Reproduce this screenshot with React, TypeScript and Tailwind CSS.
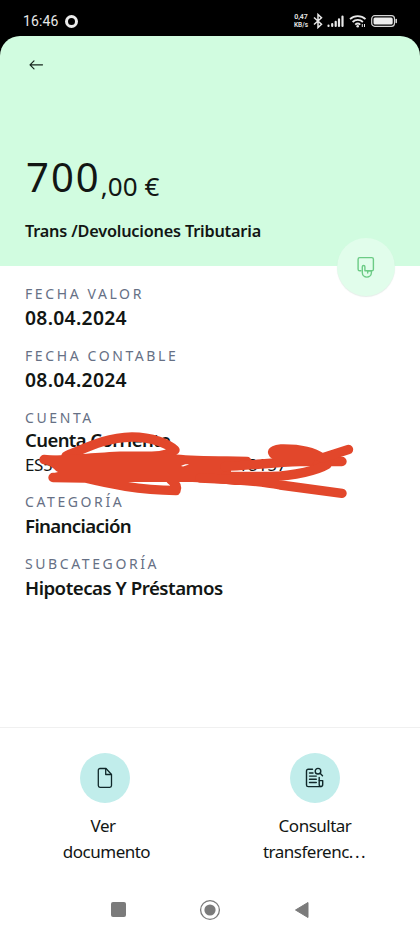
import type { ReactNode } from "react";

interface IDetail {
  label: string;
  value: string;
  valueStyle: string;
}

const topDetails: IDetail[] = [
  { label: "FECHA VALOR", value: "08.04.2024", valueStyle: "text-[19.3px] tracking-[0.3px]" },
  { label: "FECHA CONTABLE", value: "08.04.2024", valueStyle: "text-[19.3px] tracking-[0.3px]" },
];

const bottomDetails: IDetail[] = [
  { label: "CATEGORÍA", value: "Financiación", valueStyle: "text-[18.7px] tracking-[-0.65px]" },
  { label: "SUBCATEGORÍA", value: "Hipotecas Y Préstamos", valueStyle: "text-[18.7px] tracking-[-0.5px]" },
];

const StatusBar = () => (
  <div className="flex h-9 items-center bg-black pl-[23px] pr-[22px] pt-[6px] font-[Roboto,sans-serif] text-[#e8e8e8]">
    <span className="text-[14px] leading-4 tracking-[0.1px]">16:46</span>
    <span className="ml-[7px] size-[13px] rounded-full border-[3px] border-[#ececec]" />
    <div className="ml-auto flex items-center">
      <div className="flex w-4 flex-col gap-px text-center text-[7px] font-semibold leading-[7px]">
        <p>0,47</p>
        <p className="text-[6.5px]">KB/s</p>
      </div>
      <svg className="ml-[4px]" width="10" height="16" viewBox="0 0 10 16" fill="none" stroke="currentColor" strokeWidth="1.5">
        <path d="M1 4.5l7.5 6.7L5 14.5v-13l3.5 3.3L1 11.5" />
      </svg>
      <svg className="ml-[4px]" width="17" height="14" viewBox="0 0 17 14" fill="none" stroke="currentColor" strokeWidth="2.2" strokeLinecap="round">
        <path d="M1.5 11.7v.2M5.2 10v1.9M8.7 7.8v4.1M12 5.3v6.6M15.5 2.5v9.4" />
      </svg>
      <svg className="ml-[5px]" width="18" height="14" viewBox="0 0 18 14" fill="none" stroke="currentColor" strokeWidth="1.8">
        <path d="M1 5.2a11.3 11.3 0 0 1 15.5 0M3.6 8a7.5 7.5 0 0 1 10.3 0M6.2 10.6a3.9 3.9 0 0 1 5.1 0" />
        <circle cx="8.7" cy="12.2" r="1.3" fill="currentColor" stroke="none" />
        <path d="M13.3 10v3M15.5 10v3" strokeWidth="1" />
      </svg>
      <svg className="ml-[4px]" width="27" height="12" viewBox="0 0 27 12" fill="none">
        <rect x=".7" y=".7" width="22.8" height="10.6" rx="3" stroke="#d6d6d6" strokeWidth="1.2" />
        <rect x="2.5" y="2.4" width="19.2" height="7.2" rx="1.5" fill="#ececec" />
        <path d="M25.2 4.4v3.2" stroke="#ececec" strokeWidth="1.4" strokeLinecap="round" />
      </svg>
    </div>
  </div>
);

const Label = ({ children }: { children: ReactNode }) => (
  <p className="h-5 whitespace-nowrap text-[14px] leading-5 tracking-[2.6px] text-[#667085]">{children}</p>
);

const Detail = ({ label, value, valueStyle }: IDetail) => (
  <div className="h-[62px]">
    <Label>{label}</Label>
    <p className={"whitespace-nowrap font-semibold leading-7 " + valueStyle}>{value}</p>
  </div>
);

// Hand drawn marker strokes over the account number
const Scribble = () => (
  <svg
    className="absolute left-0 top-[22px]"
    width="370"
    height="70"
    viewBox="0 430 370 70"
    fill="none"
    stroke="#e2472b"
    strokeWidth="9.4"
    strokeLinecap="round"
    strokeLinejoin="round"
  >
    <path d="M66 456C88 447 106 437.5 132 437C153 437 168 444 175 450C170 455 158 456 150 457" />
    <path d="M44 459.5L60 461L180 461L247 461.5" />
    <path d="M53 477.5L85 478C110 484 138 490 176 490.5C178 486 175 483 171 480" />
    <path
      d="M44 456C75 455 90 453 120 451.500L158 451.500C170 455 190 456 247 457V469L231 470V472L270 474V480L262 485L235 485C200 481 180 482.500 90 482L53 480V473.500L58 472C54 470 53 466 44 464Z"
      fill="#e2472b"
      stroke="none"
    />
    <path d="M225 466.5C245 466 275 462 300 461.5L342 461.5" />
    <path d="M225 476.5L270 476.5C295 476 318 470 327 464.5" />
    <path d="M200 478C230 479 260 481 280 485L342 493.3" />
    <path d="M348.5 449.5L322 458C312 451 297 448.7 281 449C269 450 270 455 284 458.3L310 460" />
    <path d="M181 466C184 464 187 464 189 464.5L183 466.5Z" fill="white" stroke="none" />
  </svg>
);

const Action = ({ icon, children }: { icon: ReactNode; children: ReactNode }) => (
  <div className="flex w-[210px] flex-col items-center">
    <div className="flex size-[50px] items-center justify-center rounded-full bg-[#c1edeb]">{icon}</div>
    <div className="mt-[10px] whitespace-pre text-center text-[17px] leading-[26px] tracking-[-0.5px]">{children}</div>
  </div>
);

const DocumentIcon = () => (
  <svg width="24" height="24" viewBox="0 0 24 24" fill="none" stroke="#10282a" strokeWidth="1.3" strokeLinejoin="round">
    <path d="M13 2.5H7a1.700 1.700 0 0 0-1.700 1.700v15.400A1.700 1.700 0 0 0 7 21.300h9.800a1.700 1.700 0 0 0 1.700-1.700V8.500z" />
    <path d="M12.700 2.500v6h5.800" />
  </svg>
);

const ReportIcon = () => (
  <svg width="24" height="24" viewBox="0 0 24 24" fill="none" stroke="#10282a" strokeWidth="1.4" strokeLinecap="round" strokeLinejoin="round">
    <path d="M9.500 3.200H5.200a1.700 1.700 0 0 0-1.700 1.700v14a1.700 1.700 0 0 0 1.700 1.700h12.500a2 2 0 0 0 2-2v-4h-3.500" />
    <path d="M16.200 11.500v7.100a2 2 0 0 0 2 2M6.500 7h3.500M6.500 10.100h6.800M6.500 13.300h6.800M6.500 16.500h6.800" />
    <circle cx="15" cy="5.2" r="2.8" />
    <path d="M17.100 7.300l2.400 2.400" />
  </svg>
);

const App = () => {
  return (
    <div className="h-[934px] w-[420px] overflow-hidden bg-white font-['Noto_Sans',sans-serif] text-[#121614]">
      <StatusBar />
      <div className="bg-black">
        <header className="relative h-[230px] rounded-t-[20px] bg-[#d1fce0] px-[25px]">
          <svg className="absolute left-[29px] top-[22px]" width="15" height="14" viewBox="0 0 15 14" fill="none" stroke="#17241d" strokeWidth="1.2" strokeLinecap="round" strokeLinejoin="round">
            <path d="M13.5 6.800H1M5 2.800L1 6.800l4 4" />
          </svg>
          <div className="box-content flex h-[60px] items-baseline pt-[111px] leading-[60px]">
            <span className="ml-px text-[40px] tracking-[2px]">700</span>
            <span className="relative top-1 text-[26px] tracking-[0.1px]">,00 €</span>
          </div>
          <h1 className="mt-[10px] whitespace-nowrap text-[16.3px] font-semibold leading-7 tracking-[-0.2px]">Trans /Devoluciones Tributaria</h1>
          <button className="absolute left-[337px] top-[202px] flex size-[58px] items-center justify-center rounded-full bg-[#e1fdeb] shadow-[0_1px_1px_rgba(0,80,40,0.1)]">
            <svg width="24" height="24" viewBox="0 0 24 24" fill="none" stroke="#6ccb85" strokeWidth="1.4" strokeLinecap="round" strokeLinejoin="round">
              <path d="M7 15.800H5.700a1.600 1.600 0 0 1-1.600-1.600V4.200a1.600 1.600 0 0 1 1.600-1.600h12.100a1.600 1.600 0 0 1 1.600 1.600v10a1.600 1.600 0 0 1-1.600 1.600h-4.300" />
              <path d="M8.300 17.500v-5.700a1.300 1.300 0 0 1 2.600 0v4h6.500v1.800a4.500 4.500 0 0 1-9.100 0M13.700 16v2" />
            </svg>
          </button>
        </header>
      </div>
      <main className="h-[461px] px-[25px] pt-[18px]">
        {topDetails.map((detail) => (
          <Detail key={detail.label} {...detail} />
        ))}
        <div className="relative -mx-[25px] h-[84px] px-[25px]">
          <Label>CUENTA</Label>
          <p className="whitespace-nowrap text-[18.5px] font-semibold leading-6 tracking-[-0.6px]">Cuenta Corriente</p>
          <div className="flex text-[17px] leading-[26px] tracking-[-0.4px]">
            <span className="w-[213px]">ES5</span>
            <span className="tracking-normal">18157</span>
          </div>
          <Scribble />
        </div>
        {bottomDetails.map((detail) => (
          <Detail key={detail.label} {...detail} />
        ))}
      </main>
      <footer className="flex h-[158px] border-t border-[#f0f0f0] pt-[25px]">
        <Action icon={<DocumentIcon />}>
          <p>Ver </p>
          <p className="pl-[3px]">documento</p>
        </Action>
        <Action icon={<ReportIcon />}>
          <p>Consultar</p>
          <p>
            transferenc<span className="tracking-[1.5px]">...</span>
          </p>
        </Action>
      </footer>
      <nav className="flex h-[49px] items-center justify-between px-[111px] text-[#7b7b7b]">
        <span className="size-[15px] rounded-[2px] bg-current" />
        <svg width="22" height="22" viewBox="0 0 22 22">
          <circle cx="11" cy="11" r="9.4" fill="none" stroke="currentColor" strokeWidth="1.3" />
          <circle cx="11" cy="11" r="5.6" fill="currentColor" />
        </svg>
        <svg width="15" height="18" viewBox="0 0 15 18" fill="currentColor" stroke="currentColor" strokeLinejoin="round">
          <path d="M1.500 9L14 1.500v15z" />
        </svg>
      </nav>
    </div>
  );
};

export default App;
